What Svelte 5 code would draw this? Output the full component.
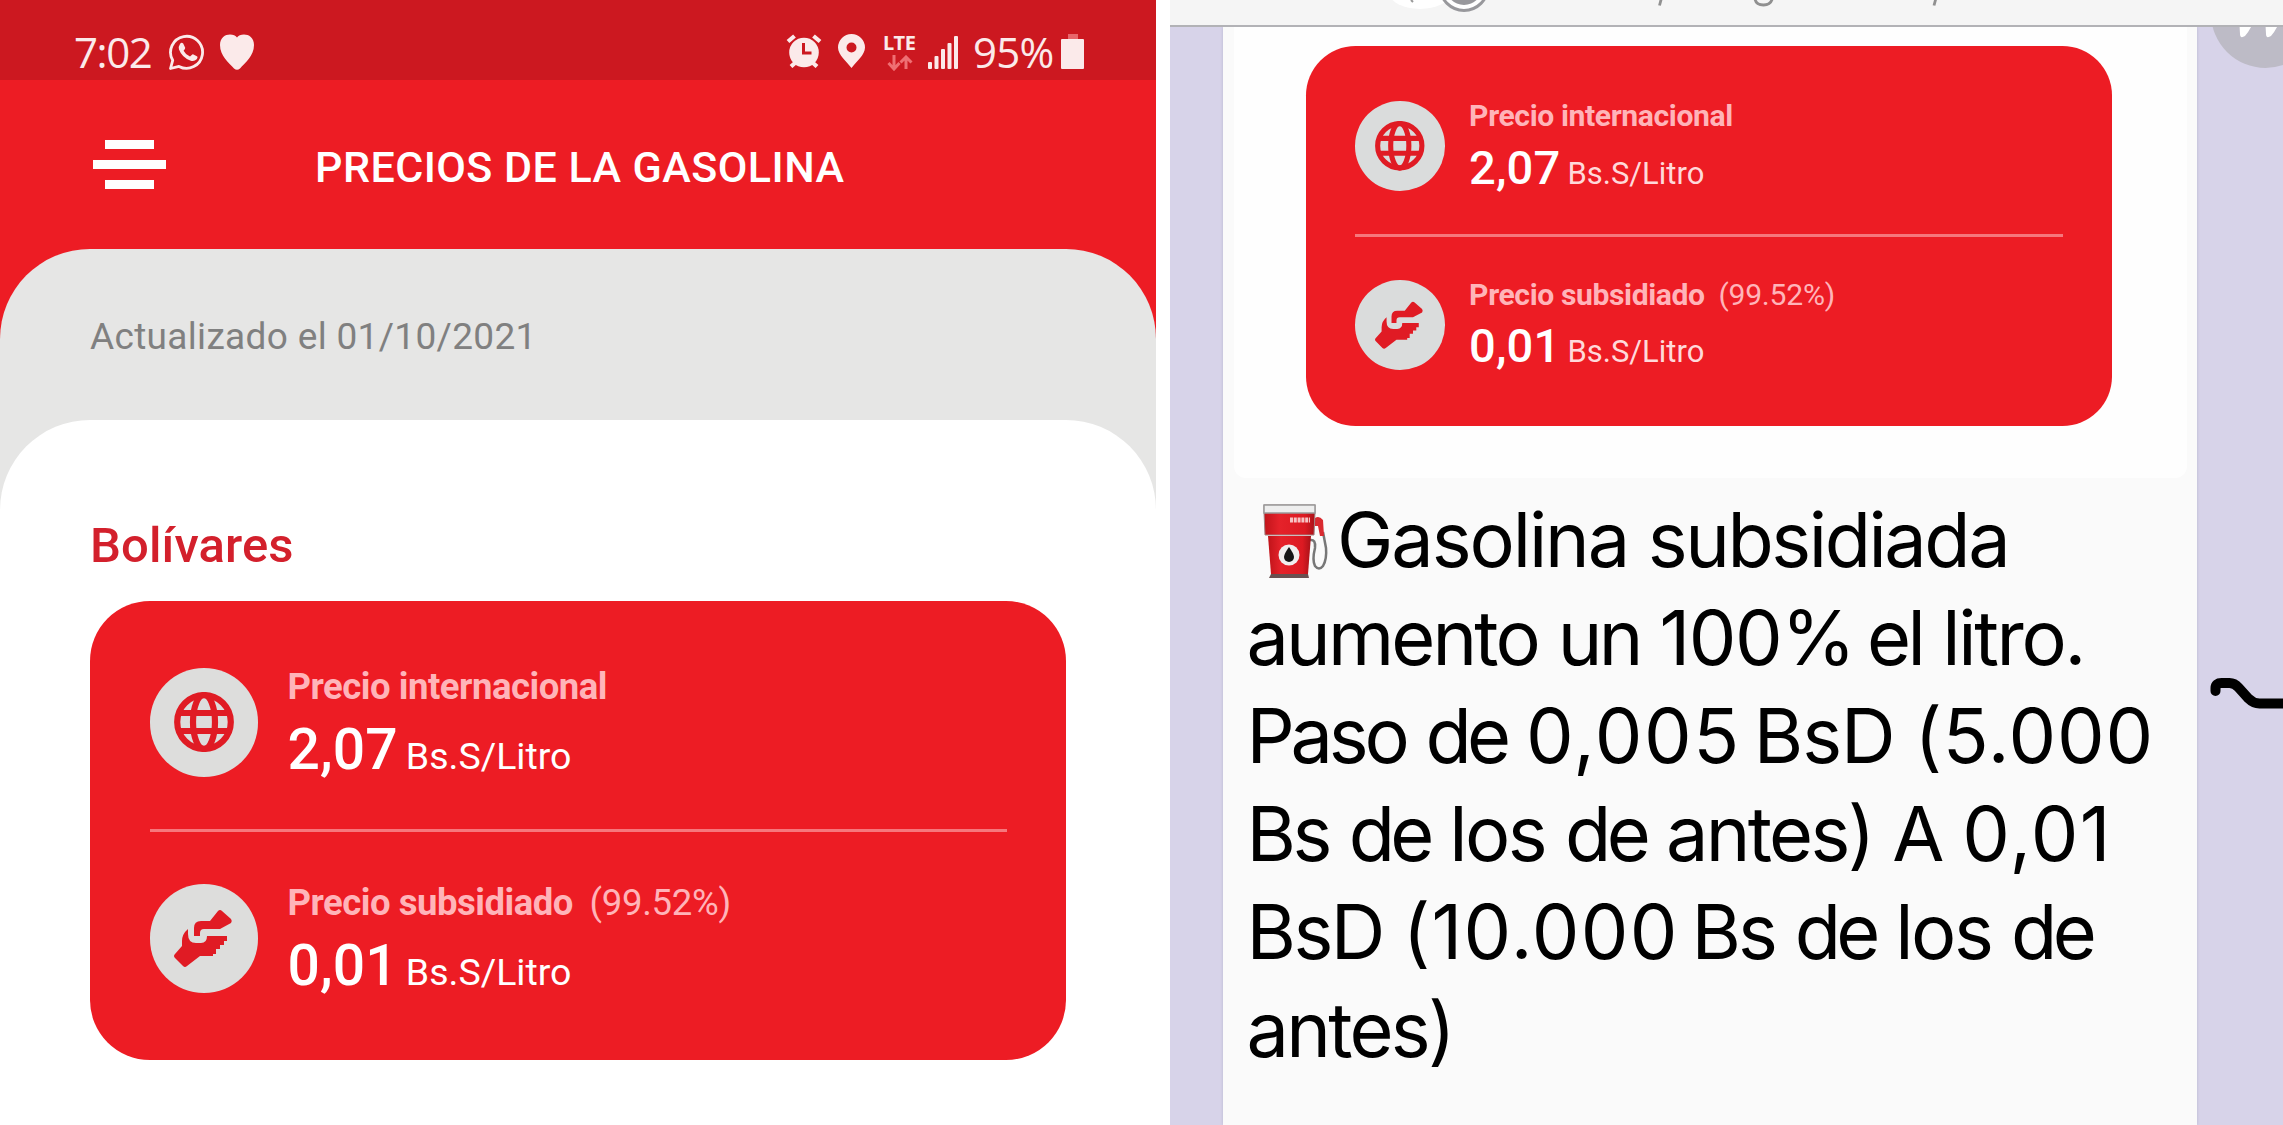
<script lang="ts">
    type Price = {
        icon: string;
        label: string;
        note?: string;
        value: string;
    };

    const prices: Price[] = [
        { icon: "globe", label: "Precio internacional", value: "2,07" },
        {
            icon: "hands",
            label: "Precio subsidiado",
            note: "(99.52%)",
            value: "0,01",
        },
    ];

    type Word = [text: string, tracking: number];

    // figures are set wider than the words around them
    const message: Word[][] = [
        [["Gasolina", -2.1], ["subsidiada", -2.45]],
        [["aumento", -2.85], ["un", -3.7], ["100%", -1.4], ["el", -3.5], ["litro.", -2.3]],
        [["Paso", -4.2], ["de", -4.8], ["0,005", 1.6], ["BsD", -1], ["(5.000", 0.9]],
        [["Bs", -3.5], ["de", -4.8], ["los", -2.5], ["de", -4.5], ["antes)", -2.7], ["A", -2], ["0,01", 1.4]],
        [["BsD", -2.5], ["(10.000", 1.3], ["Bs", -3], ["de", -4.8], ["los", -2.5], ["de", -4.5]],
        [["antes)", -2.7]],
    ];
</script>

{#snippet priceCard(size: string)}
    <div class="card {size}">
        {#each prices as price}
            <div class="row">
                <div class="badge">
                    {#if price.icon == "globe"}
                        <svg viewBox="0 0 60 60" fill="none" stroke="currentColor" stroke-width="6.2">
                            <circle cx="30" cy="30" r="26.8" />
                            <ellipse cx="30" cy="30" rx="11" ry="27" />
                            <path d="M5 21h50M5 39h50" />
                        </svg>
                    {:else}
                        <svg viewBox="0 0 60 60" fill="currentColor">
                            <path
                                d="M20 20q0-7 7-7h9L44 3q2-2 4 0l9 8q1.500 2 0 4L46 21H30q-4 0-4 4v3h-6z"
                            />
                            <path
                                d="M8 33q0-7 6-12v5q0 9 8 9h5q6 0 6-7h20v5h-3v4h-4v4h-4v5h-3v2H26L13 58q-2 2-4 0l-8-8q-2-2 0-4l7-8z"
                            />
                        </svg>
                    {/if}
                </div>
                <div class="info">
                    <div class="label">
                        {price.label}
                        {#if price.note}<span class="note">{price.note}</span>{/if}
                    </div>
                    <div class="value">
                        <span class="amount">{price.value}</span>
                        <span class="unit">Bs.S/Litro</span>
                    </div>
                </div>
            </div>
        {/each}
    </div>
{/snippet}

<div class="board">
    <section class="phone">
        <div class="status">
            <span class="clock">7:02</span>
            <svg class="whatsapp" viewBox="0 0 38 38">
                <path
                    d="M2.500 35.500l2.200-8.200A16 16 0 1 1 11 33.400z"
                    fill="none"
                    stroke="currentColor"
                    stroke-width="2.800"
                    stroke-linejoin="round"
                />
                <path
                    d="M12 11q1.500-2 3.200-.5l2 4.300q.2 1-1.600 3 2 4 6.400 5.800l2.300-2.200q.6-.5 1.200 0l3.800 2q.7 1-.6 2.800-2.700 2.700-6.500 1.200Q14 24.500 11 16.500q-.8-3 1-5.500z"
                    fill="currentColor"
                />
            </svg>
            <svg class="heart" viewBox="0 0 34 36">
                <path
                    d="M17 3.500C14-1.500 0-1.500 0 11c0 11 9 18 14 23.500q3 2.500 6 0C25 29 34 22 34 11 34-1.500 20-1.500 17 3.500z"
                    fill="currentColor"
                />
            </svg>

            <div class="indicators">
                <svg class="alarm" viewBox="0 0 36 34">
                    <circle cx="18" cy="18.500" r="14.800" fill="currentColor" />
                    <path
                        d="M2 7.500L8.500 2M34 7.500L27.500 2M9 29l-4 3.500M27 29l4 3.500"
                        stroke="currentColor"
                        stroke-width="4.200"
                    />
                    <path d="M17.500 9v10h8" fill="none" stroke="#cc1820" stroke-width="3" />
                </svg>
                <svg class="pin" viewBox="0 0 27 34">
                    <path
                        fill-rule="evenodd"
                        d="M13.500 0A13.500 13.500 0 0 0 0 13.500C0 21 9 28 13.500 34 18 28 27 21 27 13.500A13.500 13.500 0 0 0 13.500 0zM13.500 8.500a5 5 0 1 1 0 10 5 5 0 0 1 0-10z"
                        fill="currentColor"
                    />
                </svg>
                <div class="lte">
                    <span>LTE</span>
                    <svg viewBox="0 0 26 16" fill="none" stroke="currentColor" stroke-width="3">
                        <path d="M7 0v13M1.500 8l5.500 6 5.500-6M19 14V2M13.500 7.500L19 2l5.500 5.500" />
                    </svg>
                </div>
                <svg class="signal" viewBox="0 0 31 34" fill="currentColor">
                    <rect x="0" y="26" width="4" height="7" rx="1" />
                    <rect x="6.500" y="20" width="4" height="13" rx="1" />
                    <rect x="13" y="13" width="4" height="20" rx="1" />
                    <rect x="19.500" y="7" width="4" height="26" rx="1" />
                    <rect x="26" y="0" width="4" height="33" rx="1" />
                </svg>
                <span class="percent">95%</span>
                <svg class="battery" viewBox="0 0 23 35">
                    <rect x="7" y="0" width="10" height="5" fill="#e8666b" />
                    <rect x="0" y="5" width="23" height="30" rx="1" fill="currentColor" />
                </svg>
            </div>
        </div>

        <header>
            <div class="menu">
                <i></i>
                <i class="wide"></i>
                <i></i>
            </div>
            <h1>PRECIOS DE LA GASOLINA</h1>
        </header>

        <div class="updated">
            <p>Actualizado el 01/10/2021</p>
            <div class="sheet">
                <h2>Bolívares</h2>
                {@render priceCard("large")}
            </div>
        </div>
    </section>

    <section class="chat">
        <div class="browser">
            <!-- lower edge of the address bar -->
            <svg viewBox="0 0 1113 25">
                <ellipse cx="250" cy="-6" rx="30" ry="15" fill="#fff" />
                <path d="M241 0l2 2" stroke="#999" stroke-width="2" />
                <circle cx="294" cy="-13.600" r="24" fill="#fff" stroke="#98989c" stroke-width="3" />
                <circle cx="294" cy="-13.600" r="18.500" fill="#98989c" />
                <g fill="none" stroke="#909090" stroke-width="2.800">
                    <path d="M491.500-2l-2 7.500M766-2l-2 7.500" />
                    <path d="M585-1q1 6 8.500 6t9-7" />
                </g>
            </svg>
        </div>
        <div class="wall">
            <div class="bubble">
                <div class="photo">
                    {@render priceCard("small")}
                </div>
                <div class="message">
                    {#each message as line, i}
                        <div class="line">
                            {#if i == 0}
                                <svg class="pump" viewBox="0 0 66 74">
                                    <defs>
                                        <linearGradient id="body" x1="0" x2="1" y1="0" y2="0">
                                            <stop offset="0" stop-color="#c0141a" />
                                            <stop offset=".3" stop-color="#e5222a" />
                                            <stop offset=".8" stop-color="#dc1a22" />
                                            <stop offset="1" stop-color="#a81218" />
                                        </linearGradient>
                                    </defs>
                                    <path
                                        d="M47 36q6-1 5 8-3 12 0 18 4 5 8 0 4-7 3-18l-3-16"
                                        fill="none"
                                        stroke="#777"
                                        stroke-width="2.500"
                                    />
                                    <path d="M52 14q4-3 8 2l1 16h-4l-2-10h-3z" fill="#d92a30" />
                                    <path d="M5 32h43l-3 38H8z" fill="url(#body)" />
                                    <path d="M8 70h37l1 4H6z" fill="#6a5050" />
                                    <path d="M1 1h51v7l-1 23H2L1 8z" fill="url(#body)" stroke="#a08080" stroke-width="1" />
                                    <path d="M1 1h51v8H1z" fill="#eee" stroke="#999" stroke-width="1.500" />
                                    <path d="M27 16h20" stroke="#f7c4c4" stroke-width="5" stroke-dasharray="3 .8" />
                                    <circle cx="26" cy="51" r="10.500" fill="#f0eeee" />
                                    <path d="M26 43q5 7 5 10a5 5 0 0 1-10 0q0-3 5-10z" fill="#151515" />
                                </svg>
                            {/if}
                            <p>
                                {#each line as [text, tracking]}
                                    <span class:figure={/\d/.test(text)} style="letter-spacing: {tracking}px">{text}</span>{" "}
                                {/each}
                            </p>
                        </div>
                    {/each}
                </div>
            </div>

            <div class="quote">
                <svg viewBox="0 0 109 109" fill="#fff">
                    <path d="M28 57h14q2 0 1 4-3 9-9 16-5 3-5-2z" />
                    <path d="M54 57h14q2 0 1 4-3 9-9 16-5 3-5-2z" />
                </svg>
            </div>
            <svg class="scribble" viewBox="0 0 75 40">
                <path
                    d="M7.500 14v-3q0-5 6-5h8q5 0 9 4.500l10 11q5 5 11 5H80"
                    fill="none"
                    stroke="#000"
                    stroke-width="10"
                    stroke-linecap="round"
                />
            </svg>
        </div>
    </section>
</div>

<style>
    :global(body) {
        background: #fff;
    }

    .board {
        display: grid;
        grid-template-columns: 1156px 1113px;
        column-gap: 14px;
        height: 1125px;
        overflow: hidden;
        font-family: Roboto, sans-serif;
    }

    svg {
        display: block;
        flex: none;
    }

    .phone {
        display: flex;
        flex-direction: column;
        background: #ed1c24;
    }

    .status {
        display: flex;
        box-sizing: border-box;
        height: 80px;
        padding: 33px 72px 0 74px;
        background: #cc1820;
        color: #fbeaea;
    }

    .clock,
    .percent {
        font-family: "Open Sans", sans-serif;
        font-size: 42px;
        line-height: 37px;
        font-weight: 400;
    }

    .clock {
        width: 94px;
        letter-spacing: -1.4px;
    }

    .whatsapp {
        width: 38px;
        height: 38px;
    }

    .heart {
        width: 34px;
        height: 36px;
        margin: 1px 0 0 14px;
    }

    .indicators {
        display: flex;
        margin-left: auto;
    }

    .alarm {
        width: 36px;
        height: 34px;
        margin: 1px 16px 0 0;
    }

    .pin {
        width: 27px;
        height: 34px;
        margin: 1px 18px 0 0;
    }

    .lte {
        width: 45px;
        font: 700 20px/20px "Noto Sans", sans-serif;
        letter-spacing: -0.3px;
    }

    .lte svg {
        width: 26px;
        height: 16px;
        margin: 2px 0 0 4px;
        color: #ef6f73;
    }

    .signal {
        width: 31px;
        height: 34px;
        margin: 3px 14px 0 0;
    }

    .percent {
        width: 88px;
        letter-spacing: -0.8px;
    }

    .battery {
        width: 23px;
        height: 35px;
        margin-top: 1px;
    }

    header {
        display: flex;
        height: 169px;
    }

    .menu {
        display: flex;
        flex-direction: column;
        align-items: center;
        gap: 11px;
        width: 73px;
        padding: 60px 0 0 93px;
    }

    .menu i {
        width: 49px;
        height: 9px;
        background: #fff;
    }

    .menu .wide {
        width: 73px;
    }

    h1 {
        margin: 62px 0 0 149px;
        font-size: 43px;
        font-weight: 500;
        line-height: 50px;
        letter-spacing: 0.45px;
        color: #fff;
    }

    .updated {
        display: flex;
        flex-direction: column;
        flex: 1;
        border-radius: 90px 90px 0 0;
        background: #e6e6e5;
    }

    .updated p {
        height: 108px;
        margin: 0;
        padding: 63px 0 0 90px;
        font-size: 37px;
        line-height: 50px;
        letter-spacing: 0.33px;
        color: #808080;
    }

    .sheet {
        flex: 1;
        padding: 96px 90px 0;
        border-radius: 90px 90px 0 0;
        background: #fff;
    }

    h2 {
        margin: 0;
        height: 85px;
        font-size: 49px;
        font-weight: 500;
        line-height: 60px;
        letter-spacing: 0.1px;
        color: #d3202c;
    }

    /* price card, every length is multiplied by --s */
    .card {
        --s: 1;
        box-sizing: border-box;
        padding: calc(67px * var(--s)) calc(59.5px * var(--s));
        border-radius: calc(60px * var(--s));
        background: #ed1c24;
        color: #fff;
    }

    .card.small {
        --s: 0.826;
    }

    .row {
        display: flex;
        height: calc(109px * var(--s));
    }

    .row + .row {
        margin-top: calc(52px * var(--s));
        padding-top: calc(52px * var(--s));
        border-top: 3px solid #f6777c;
    }

    .badge {
        display: grid;
        place-items: center;
        width: calc(108.5px * var(--s));
        height: calc(108.5px * var(--s));
        border-radius: 50%;
        background: #dddddc;
        color: #e01b24;
    }

    .badge svg {
        width: calc(60px * var(--s));
        height: calc(60px * var(--s));
    }

    .small .badge {
        background: #dadcdc;
    }

    .info {
        padding-left: calc(29.5px * var(--s));
        white-space: nowrap;
    }

    .label {
        font-size: calc(36.5px * var(--s));
        font-weight: 700;
        line-height: calc(38px * var(--s));
        letter-spacing: calc(-0.48px * var(--s));
        color: #ffb4b9;
    }

    .note {
        margin-left: calc(8px * var(--s));
        font-weight: 400;
        letter-spacing: calc(-0.3px * var(--s));
    }

    .value {
        margin-top: calc(7.5px * var(--s));
        line-height: calc(72px * var(--s));
    }

    .small .label {
        line-height: 30px;
    }

    .amount {
        font-size: calc(57px * var(--s));
        font-weight: 500;
        letter-spacing: calc(0.1px * var(--s));
    }

    .unit {
        margin-left: calc(4px * var(--s));
        font-size: calc(37.5px * var(--s));
        letter-spacing: 0;
    }

    .small .unit {
        color: #ffd9da;
    }

    .chat {
        display: flex;
        flex-direction: column;
        overflow: hidden;
    }

    .browser {
        height: 25px;
        border-bottom: 2px solid #b2b2b6;
        background: #f5f5f5;
    }

    .browser svg {
        width: 1113px;
        height: 25px;
    }

    .wall {
        position: relative;
        flex: 1;
        padding-left: 53px;
        overflow: hidden;
        background: #d7d3e9;
    }

    .bubble {
        box-sizing: border-box;
        width: 974px;
        height: 100%;
        padding: 0 10px 0 11px;
        background: #fafafa;
        box-shadow: 0 0 3px #b9b5d0;
    }

    .photo {
        box-sizing: border-box;
        height: 451px;
        padding: 19px 75px 0 72px;
        border-radius: 0 0 12px 12px;
        background: #fefefe;
    }

    .message {
        padding: 12.5px 0 0 12.5px;
        font: 75.6px/98px Inter, sans-serif;
        color: #000;
        white-space: nowrap;
    }

    .line {
        display: flex;
        height: 98px;
    }

    .line p {
        margin: 0;
        word-spacing: -1.5px;
    }

    .figure {
        margin-right: -7px;
    }

    .pump {
        width: 66px;
        height: 74px;
        margin: 13px 8px 0 16.5px;
    }

    .quote {
        position: absolute;
        top: -68px;
        left: 1041px;
        width: 109px;
        height: 109px;
        border-radius: 50%;
        background: #bdbbc6;
    }

    .scribble {
        position: absolute;
        top: 650px;
        left: 1038px;
        width: 75px;
        height: 40px;
    }
</style>
